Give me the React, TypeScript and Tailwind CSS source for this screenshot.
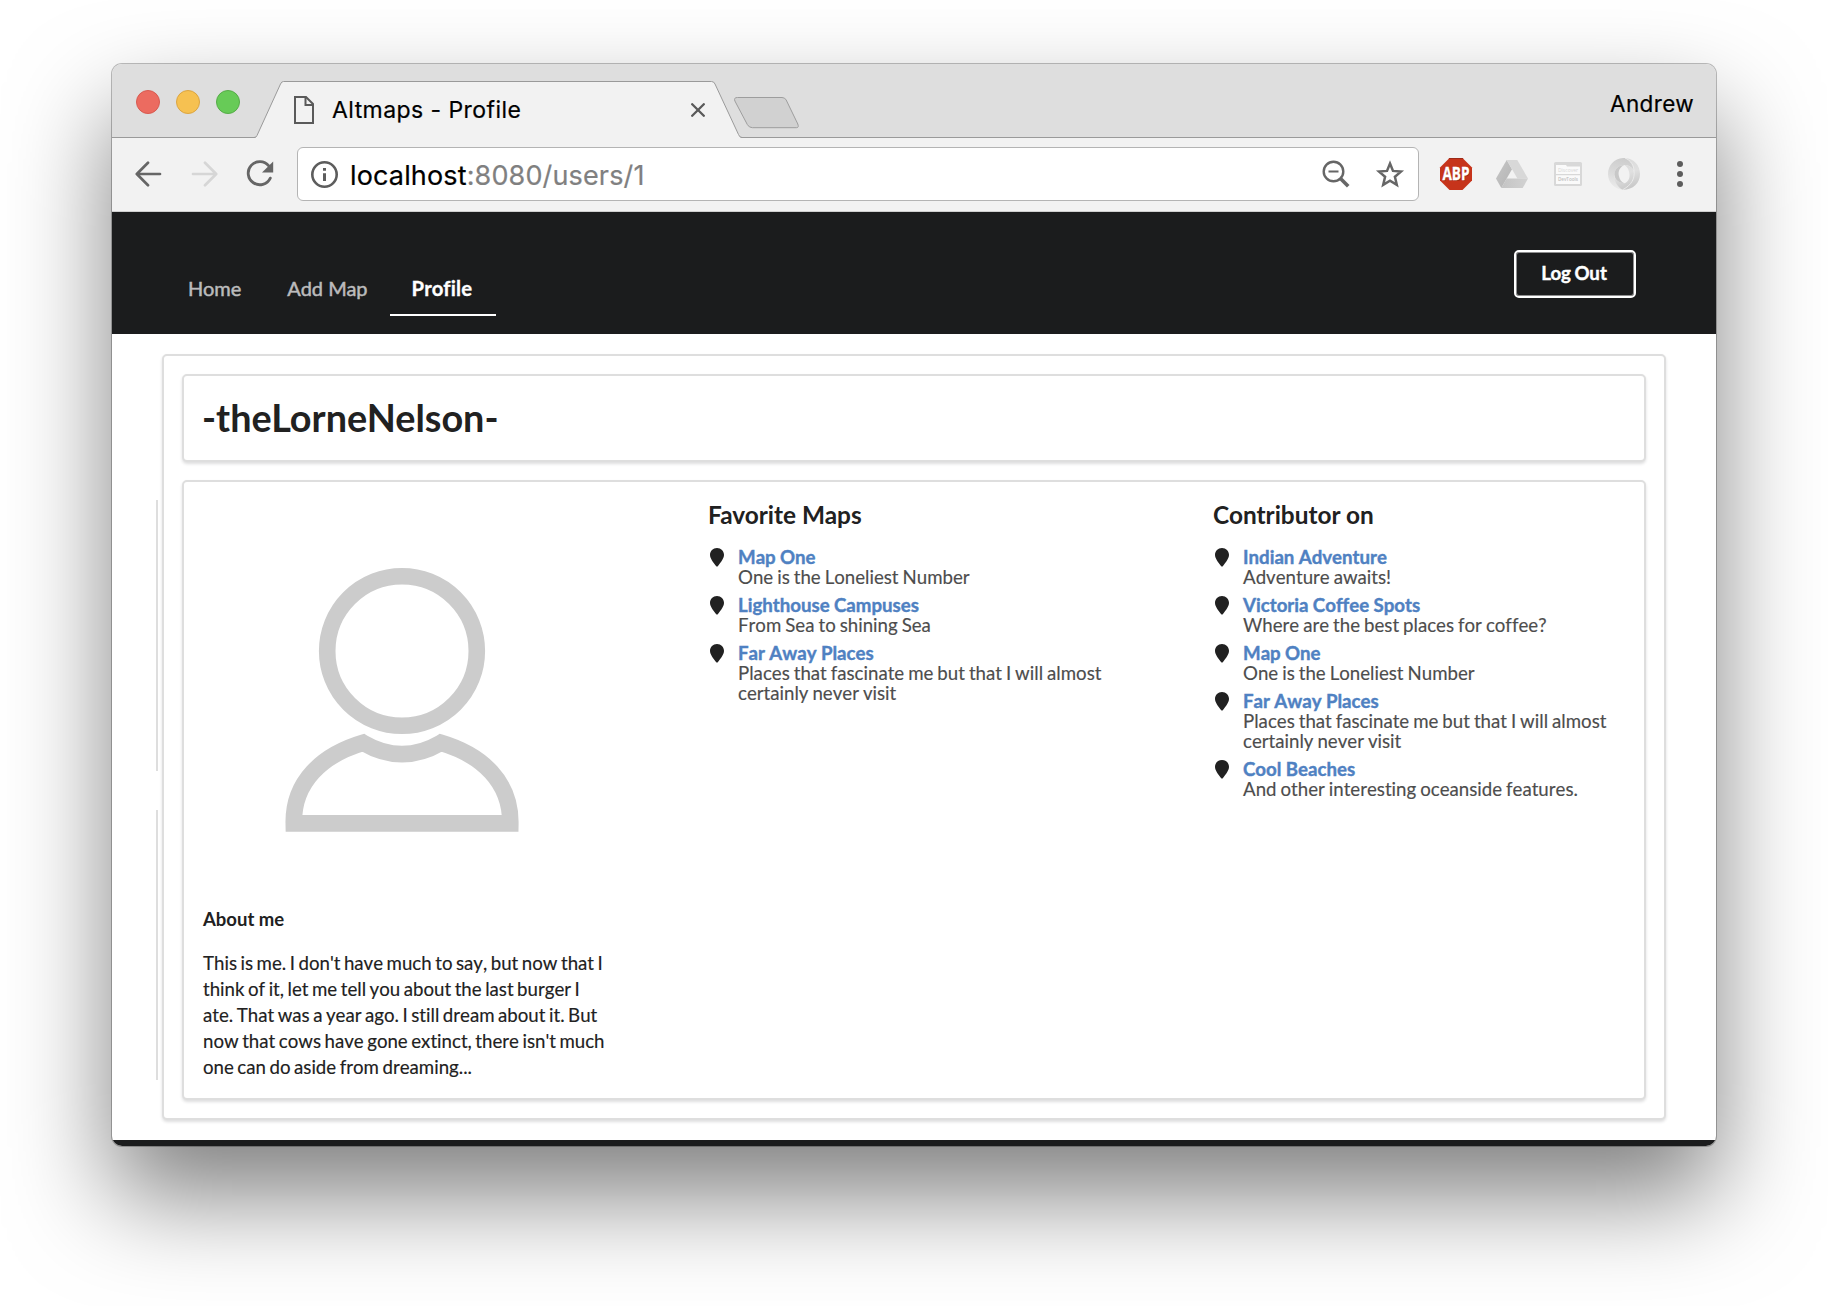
import React from "react";

type MapEntry = { title: string; description: string };

const favorites: MapEntry[] = [
  { title: "Map One", description: "One is the Loneliest Number" },
  { title: "Lighthouse Campuses", description: "From Sea to shining Sea" },
  { title: "Far Away Places", description: "Places that fascinate me but that I will almost certainly never visit" },
];

const contributions: MapEntry[] = [
  { title: "Indian Adventure", description: "Adventure awaits!" },
  { title: "Victoria Coffee Spots", description: "Where are the best places for coffee?" },
  { title: "Map One", description: "One is the Loneliest Number" },
  { title: "Far Away Places", description: "Places that fascinate me but that I will almost certainly never visit" },
  { title: "Cool Beaches", description: "And other interesting oceanside features." },
];

function TitleBar() {
  return (
    <div className="relative flex h-[74px] shrink-0 border-b border-[#9a9a9a] bg-[#dedede]">
      <svg className="absolute top-0 left-0" width="1604" height="75" viewBox="0 0 1604 75" fill="none">
        <path d="M142 75 L143.5 73.5 Q144.5 73 145 71.5 L168.5 20 Q169.5 17.5 171.5 17.5 H599.5 Q602 17.5 603 20 L626.5 70.5 Q627.5 73.5 629 73.5 L631 75 Z" fill="#f2f2f2" />
        <path d="M142 73.5 Q144.3 73.5 145 71.5 L168.5 20 Q169.5 17.5 171.5 17.5 H599.5 Q602 17.5 603 20 L626.5 70.5 Q627.5 73.5 630 73.5" stroke="#9a9a9a" />
        <path d="M625.5 33.5 H670 Q673 33.5 674.2 36 L685.8 60 Q687.2 63.7 684.5 63.7 H640.5 Q637 63.7 635.3 60.5 L622.9 37 Q621.5 33.5 625.5 33.5 Z" fill="#d1d1d1" stroke="#9d9d9d" />
      </svg>
      <div className="relative flex gap-4 pt-[26px] pl-6">
        <span className="size-6 rounded-full border border-[#d85a50] bg-[#ec6b60]" />
        <span className="size-6 rounded-full border border-[#dca541] bg-[#f6c151]" />
        <span className="size-6 rounded-full border border-[#56ac48] bg-[#67cb57]" />
      </div>
      <div className="relative ml-[54px] flex w-[411px] items-start">
        <svg className="mt-8 shrink-0" width="20" height="28" viewBox="0 0 20 28" fill="none" stroke="#5a5a5a" strokeWidth="2">
          <path d="M1 1 H12 L19 8 V27 H1 Z" />
          <path d="M11.5 1 V9 H19" />
        </svg>
        <span className="mt-[31px] ml-[18px] flex-1 text-[23px] leading-[30px] tracking-[0.43px] whitespace-nowrap text-black [-webkit-text-stroke:0.2px_#000]">Altmaps - Profile</span>
        <svg className="mt-[39px] shrink-0" width="14" height="14" viewBox="0 0 14 14" fill="none" stroke="#5a5a5a" strokeWidth="2.3" strokeLinecap="round">
          <path d="M1.2 1.2 L12.8 12.8 M12.8 1.2 L1.2 12.8" />
        </svg>
      </div>
      <span className="relative mt-[25px] mr-[22px] ml-auto text-[22.5px] leading-[30px] tracking-[0.35px] text-black [-webkit-text-stroke:0.2px_#000]">Andrew</span>
    </div>
  );
}

function Toolbar() {
  return (
    <div className="flex h-[74px] shrink-0 items-center border-b border-[#cfcfcf] bg-[#f2f2f2] pb-px pl-[23px]">
      <svg width="27" height="26" viewBox="0 0 27 26" fill="none" stroke="#666" strokeWidth="2.7" strokeLinecap="round" strokeLinejoin="round">
        <path d="M25 13 H2 M13 1.8 L1.8 13 L13 24.2" />
      </svg>
      <svg className="ml-[29px]" width="27" height="26" viewBox="0 0 27 26" fill="none" stroke="#d6d6d6" strokeWidth="2.7" strokeLinecap="round" strokeLinejoin="round">
        <path d="M2 13 H25 M14 1.8 L25.2 13 L14 24.2" />
      </svg>
      <svg className="ml-[28px]" width="28" height="28" viewBox="0 0 28 28" fill="none">
        <path d="M22.8 5.8 A11.6 11.6 0 1 0 24.3 18.1" stroke="#666" strokeWidth="2.8" strokeLinecap="round" />
        <path d="M27.2 1.6 V12.6 H16 Z" fill="#666" />
      </svg>
      <div className="ml-[23px] flex h-[54px] w-[1122px] items-center rounded-[6px] border border-[#b4b4b4] bg-white pr-[13px] pl-[13px]">
        <svg width="27" height="27" viewBox="0 0 27 27" fill="none">
          <circle cx="13.5" cy="13.5" r="12.2" stroke="#5d5d5d" strokeWidth="2.6" />
          <path d="M13.5 7 V9.8 M13.5 12.2 V20" stroke="#5d5d5d" strokeWidth="3" />
        </svg>
        <span className="mt-1 ml-3 text-[27px] leading-[36px] tracking-[0.14px] whitespace-nowrap text-[#808080] [-webkit-text-stroke:0.2px]">
          <span className="text-black">localhost</span>:8080/users/1
        </span>
        <svg className="ml-auto" width="28" height="28" viewBox="0 0 28 28" fill="none" stroke="#666">
          <circle cx="11.5" cy="11.5" r="9.8" strokeWidth="2.4" />
          <path d="M6.5 11.5 H16.5" strokeWidth="2" />
          <path d="M18.5 18.5 L26.2 26.2" strokeWidth="3.6" />
        </svg>
        <svg className="ml-[25px]" width="30" height="29" viewBox="0 0 30 29" fill="none" stroke="#666" strokeWidth="2.5">
          <path d="M15 3.6 L18 10.9 L26 11.6 L19.9 16.8 L21.8 24.8 L15 20.6 L8.2 24.8 L10.1 16.8 L4 11.6 L12 10.9 Z" strokeMiterlimit="8" />
        </svg>
      </div>
      <svg className="ml-[21px] overflow-visible" width="32" height="32" viewBox="0 0 32 32">
        <path d="M9.5 0 H22.5 L32 9.5 V22.5 L22.5 32 H9.5 L0 22.5 V9.5 Z" fill="#c6341b" />
        <path d="M9.5 0 H22.5 L23.5 1 H8.5 Z" fill="#9c2a18" />
        <g fontFamily="Open Sans" fontWeight="700" fontSize="17" textAnchor="middle">
          <text transform="translate(16.6 23) scale(.8 1)" fill="#7d1f10" opacity="0.6">ABP</text>
          <text transform="translate(16 22.3) scale(.8 1)" fill="#fff" stroke="#fff" strokeWidth=".3">ABP</text>
        </g>
      </svg>
      <svg className="ml-6" width="32" height="28" viewBox="0 0 32 28">
        <defs>
          <linearGradient id="driveLeft" x1="0" y1="0" x2="1" y2="1"><stop offset="0" stopColor="#c6c6c6" /><stop offset="1" stopColor="#b4b4b4" /></linearGradient>
          <linearGradient id="driveBase" x1="0" y1="0" x2="1" y2="0"><stop offset="0" stopColor="#c4c4c4" /><stop offset="1" stopColor="#d2d2d2" /></linearGradient>
        </defs>
        <path d="M10.7 0 L0 18.6 L5.3 28 L16 9.3 Z" fill="url(#driveLeft)" />
        <path d="M10.7 0 H21.3 L32 18.6 H21.4 Z" fill="#d8d8d8" />
        <path d="M10.7 18.6 H32 L26.7 28 H5.3 Z" fill="url(#driveBase)" />
      </svg>
      <svg className="ml-[26px] overflow-visible" width="28" height="24" viewBox="0 0 28 24">
        <rect width="28" height="24" rx="1.5" fill="#d8d8d8" />
        <path d="M2 3 H12 L13 4.5 H26 V12 H2 Z M2 13.2 H26 V22 H2 Z" fill="#fafafa" />
        <g fontFamily="Open Sans" fontSize="5" textAnchor="middle">
          <text x="14" y="10" fill="#d6d6d6">Discover</text>
          <text transform="translate(14 19.4) scale(.92 1)" fontWeight="600" fill="#c0c0c0">DevTools</text>
        </g>
      </svg>
      <svg className="ml-[26px]" width="32" height="32" viewBox="0 0 32 32">
        <defs>
          <linearGradient id="ringInner" x1="0.6" y1="0" x2="0.4" y2="1"><stop offset="0" stopColor="#cccccc" /><stop offset="0.5" stopColor="#dadada" /><stop offset="1" stopColor="#ebebeb" /></linearGradient>
          <linearGradient id="ringOuter" x1="0.3" y1="0" x2="0.6" y2="1"><stop offset="0" stopColor="#dadada" /><stop offset="0.5" stopColor="#e0e0e0" /><stop offset="1" stopColor="#c6c6c6" /></linearGradient>
        </defs>
        <path d="M17 0 C7 -0.5 0 7 0 16 C0 25 7 31 14.5 31.8 C8 26 6 21 6.4 16 C7 10.5 11 7 16.5 7 C20 7 24 9 26 13 C26 7 23 2 17 0 Z" fill="url(#ringInner)" />
        <path d="M17 0 C26 0.5 32 7.5 32 16 C32 25 25 32 14.5 31.8 C9 28.5 6.2 23 6.2 18 C8 22.5 12 25.3 16.5 25.2 C20 24 21.8 20.5 21.5 16.5 C21.2 12 19.5 9 16.5 7 C20 7 24 9 26 13 C26 7.5 23 2.5 17 0 Z" fill="url(#ringOuter)" />
        <path d="M16.5 7 C11.5 9 10 13.5 10.8 17.5 C11.5 21.5 13.5 24.3 16.5 25.2 C11 25.3 6.8 21.5 6.4 16.5 C6.4 11 11 7 16.5 7 Z" fill="#c8c8c8" />
        <path d="M17 0 C23 2.5 26 8 26 13 C27 20 24 27 14.5 31.8" fill="none" stroke="#efefef" strokeWidth="0.8" />
      </svg>
      <svg className="ml-[37px]" width="6" height="26" viewBox="0 0 6 26" fill="#5d5d5d">
        <circle cx="3" cy="3" r="3" />
        <circle cx="3" cy="13" r="3" />
        <circle cx="3" cy="23" r="3" />
      </svg>
    </div>
  );
}

function SiteNav() {
  return (
    <nav className="flex h-[122px] shrink-0 items-start justify-between bg-[#1b1c1d] pr-20 pl-[54px] text-[20px] leading-6">
      <div className="flex pt-16 text-[#bbbbbc]">
        <a className="px-[22px] [-webkit-text-stroke:0.5px]">Home</a>
        <a className="pr-[22px] pl-6 [-webkit-text-stroke:0.5px]">Add Map</a>
        <a className="h-10 w-[106px] border-b-2 border-white pl-[22px] text-[20.3px] font-bold tracking-[0.2px] text-white [-webkit-text-stroke:0.3px]">Profile</a>
      </div>
      <button className="mt-[38px] h-12 w-[122px] rounded-[5px] border-2 border-white pr-[2px] pb-[2px] text-[18.67px] leading-[40px] font-bold [word-spacing:-1px] text-white shadow-[inset_0_0_0_1px_#8f8f90] [-webkit-text-stroke:0.4px]">Log Out</button>
    </nav>
  );
}

function MapList({ heading, entries }: { heading: string; entries: MapEntry[] }) {
  return (
    <section className="pl-px">
      <h3 className="text-[24.4px] leading-[30px] font-bold text-[#212121]">{heading}</h3>
      <ul className="mt-[17px] flex flex-col gap-2 text-[18.67px] leading-5 [font-kerning:none] [font-variant-ligatures:none]">
        {entries.map((entry) => (
          <li key={entry.title} className="flex">
            <svg className="mt-px ml-[2px] shrink-0" width="14" height="18.5" viewBox="0 0 14 18.5" fill="#212121">
              <path d="M7 0 C11 0 14 3 14 6.8 C14 10.5 11 14 8 18 Q7 19 6 18 C3 14 0 10.5 0 6.8 C0 3 3 0 7 0 Z" />
            </svg>
            <div className="ml-[14px] flex-1">
              <a className="block font-bold [word-spacing:-0.2px] text-[#4f81c2] [-webkit-text-stroke:0.4px]">{entry.title}</a>
              <p className="max-w-[376px] [word-spacing:-0.8px] text-[#4d4d4d] [-webkit-text-stroke:0.15px]">{entry.description}</p>
            </div>
          </li>
        ))}
      </ul>
    </section>
  );
}

function Avatar() {
  return (
    <svg width="400" height="400" viewBox="202 500 400 400" fill="none" stroke="#ccc" strokeWidth="16.6">
      <circle cx="402" cy="651" r="74.8" />
      <path d="M363.2 742.8 Q402 765.5 440.8 742.8 C482 755 511 782 510.3 823.4 H293.8 C293 782 322 755 363.2 742.8 Z" />
    </svg>
  );
}

const panel = "rounded-[5px] border-2 border-[#dedede] bg-white p-[18px] shadow-[0_2px_3px_rgba(34,36,38,0.15)]";

export default function App() {
  return (
    <div className="h-[1306px] w-[1828px] overflow-hidden bg-white pt-16 pl-28 font-['Inter',sans-serif]">
      <div className="flex h-[1082px] w-[1604px] flex-col overflow-hidden rounded-[10px] bg-white shadow-[0_0_0_1px_rgba(0,0,0,0.25),0_50px_100px_rgba(0,0,0,0.5)]">
        <TitleBar />
        <Toolbar />
        <div className="flex flex-1 flex-col font-['Lato',sans-serif]">
          <SiteNav />
          <main className="flex flex-1 pt-5 pl-11">
            <div className="flex w-0 shrink-0 flex-col gap-[39px] pt-[146px]">
              <span className="h-[271px] w-[2px] bg-[#dedede]" />
              <span className="h-[270px] w-[2px] bg-[#dedede]" />
            </div>
            <div className={`ml-[6px] flex h-[766px] w-[1504px] flex-col gap-[18px] ${panel}`}>
              <header className={panel}>
                <h1 className="text-[37.8px] leading-[48px] font-bold text-[#212121]">-theLorneNelson-</h1>
              </header>
              <div className={`grid flex-1 grid-cols-3 gap-x-[91px] ${panel}`}>
                <section>
                  <Avatar />
                  <h4 className="mt-[7px] ml-px text-[18.5px] leading-6 font-bold text-[#212121]">About me</h4>
                  <p className="mt-[19px] ml-px w-[408px] text-[18.67px] leading-[26px] [word-spacing:-1.25px] text-[#212121] [-webkit-text-stroke:0.15px] [font-kerning:none] [font-variant-ligatures:none]">
                    This is me. I don't have much to say, but now that I think of it, let me tell you about the last burger I ate. That was a year ago. I still dream about it. But now that cows have gone extinct, there isn't much one can do aside from dreaming...
                  </p>
                </section>
                <MapList heading="Favorite Maps" entries={favorites} />
                <MapList heading="Contributor on" entries={contributions} />
              </div>
            </div>
          </main>
          <footer className="h-[6px] shrink-0 bg-[#1b1c1d]" />
        </div>
      </div>
    </div>
  );
}
